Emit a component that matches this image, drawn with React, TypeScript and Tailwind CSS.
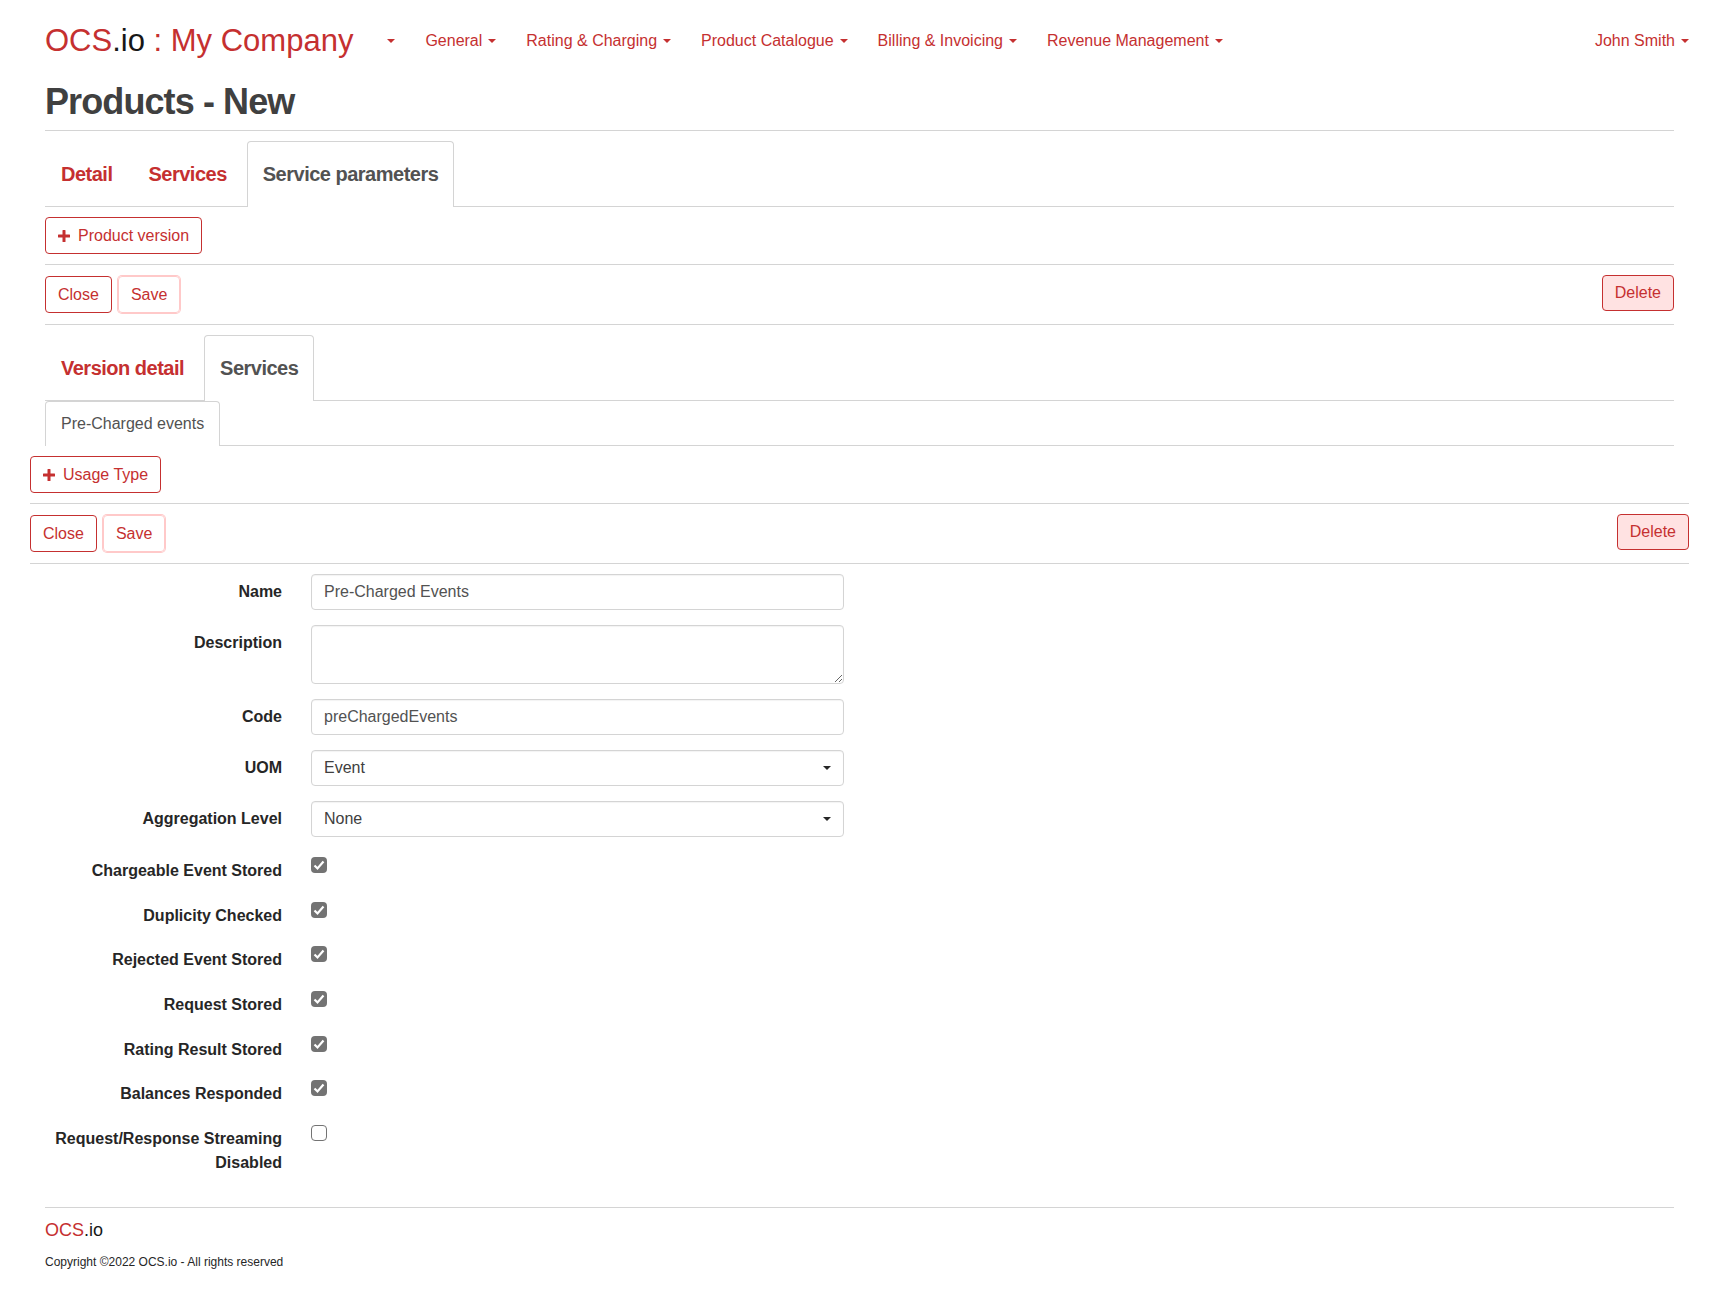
import React from "react";

const RED = "text-[#c53030]";

function Caret() {
  return <span className="ml-1.5 inline-block border-x-4 border-t-4 border-x-transparent border-t-current" />;
}

function PlusIcon() {
  return (
    <svg viewBox="0 0 12 12" className="mr-2 size-3 fill-current">
      <path d="M4.5 0.5a.5.5 0 0 1 .5-.5h2a.5.5 0 0 1 .5.5v4h4a.5.5 0 0 1 .5.5v2a.5.5 0 0 1-.5.5h-4v4a.5.5 0 0 1-.5.5H5a.5.5 0 0 1-.5-.5v-4h-4A.5.5 0 0 1 0 7V5a.5.5 0 0 1 .5-.5h4z" />
    </svg>
  );
}

function NavItem({ label }: { label: string }) {
  return (
    <a className={`flex items-center ${RED}`}>
      {label}
      <Caret />
    </a>
  );
}

function Tab({ label, active }: { label: string; active?: boolean }) {
  return active ? (
    <div className="-mb-px rounded-t border border-b-0 border-neutral-300 bg-white px-[15px] py-4 leading-8 font-semibold text-neutral-600">
      {label}
    </div>
  ) : (
    <div className={`border border-b-0 border-transparent px-[15px] py-4 leading-8 font-semibold ${RED}`}>{label}</div>
  );
}

function OutlineButton({ children, faded }: { children: React.ReactNode; faded?: boolean }) {
  return (
    <button
      className={`flex h-[37px] items-center rounded border px-3 ${RED} ${
        faded ? "border-red-200 ring-1 ring-red-200" : "border-[#c53030]"
      }`}
    >
      {children}
    </button>
  );
}

function ActionBars({ addLabel }: { addLabel: string }) {
  return (
    <div>
      <div className="border-b border-neutral-300 py-2.5">
        <div className="flex">
          <OutlineButton>
            <PlusIcon />
            {addLabel}
          </OutlineButton>
        </div>
      </div>
      <div className="flex items-start justify-between border-b border-neutral-300 py-[11px]">
        <div className="flex gap-1.5">
          <OutlineButton>Close</OutlineButton>
          <OutlineButton faded>Save</OutlineButton>
        </div>
        <button className={`-mt-px flex h-9 items-center rounded border border-[#c53030] bg-red-100 px-3 ${RED}`}>
          Delete
        </button>
      </div>
    </div>
  );
}

function Field({ label, children }: { label: string; children: React.ReactNode }) {
  return (
    <div className="flex gap-[29px]">
      <label className="w-[252px] py-1.5 text-right font-bold">{label}</label>
      <div className="w-[533px]">{children}</div>
    </div>
  );
}

const inputClass = "h-9 w-full rounded border border-neutral-300 px-3 text-neutral-600 inset-shadow-xs";

function SelectBox({ value }: { value: string }) {
  return (
    <div className={`flex items-center justify-between ${inputClass}`}>
      <span className="text-neutral-700">{value}</span>
      <span className="inline-block border-x-4 border-t-4 border-x-transparent border-t-neutral-800" />
    </div>
  );
}

function CheckRow({ label, checked }: { label: string; checked: boolean }) {
  return (
    <div className="flex min-h-7.5 gap-[29px]">
      <label className="w-[252px] pt-1.5 text-right font-bold">{label}</label>
      <div className="pt-1">
        {checked ? (
          <div className="flex size-4 items-center justify-center rounded-sm bg-neutral-500">
            <svg viewBox="0 0 16 16" className="size-4" fill="none" stroke="white" strokeWidth="2.2">
              <path d="M3.5 8.5 L6.5 11.5 L12.5 4.5" />
            </svg>
          </div>
        ) : (
          <div className="size-4 rounded-sm border border-neutral-500 bg-white" />
        )}
      </div>
    </div>
  );
}

export default function App() {
  return (
    <div className="min-h-[1294px] bg-white px-[30px] font-['Liberation_Sans',Arial,sans-serif] text-base text-neutral-800">
      <nav className="flex h-20 items-center justify-between pt-0.5">
        <div className="flex items-center gap-7.5 pl-[15px]">
          <div className={`text-[31px] ${RED}`}>
            OCS<span className="text-neutral-900">.io</span> : My Company
          </div>
          <span className={`ml-1 inline-block border-x-4 border-t-4 border-x-transparent border-t-current ${RED}`} />
          <NavItem label="General" />
          <NavItem label="Rating & Charging" />
          <NavItem label="Product Catalogue" />
          <NavItem label="Billing & Invoicing" />
          <NavItem label="Revenue Management" />
        </div>
        <NavItem label="John Smith" />
      </nav>

      <div className="px-[15px]">
        <h1 className="-mt-px border-b border-neutral-300 pb-1.5 text-4xl leading-tight font-semibold tracking-tight text-neutral-700">
          Products - New
        </h1>
        <div className="mt-2.5 flex gap-1 border-b border-neutral-300 text-xl tracking-tight">
          <Tab label="Detail" />
          <Tab label="Services" />
          <Tab label="Service parameters" active />
        </div>
        <ActionBars addLabel="Product version" />
        <div className="mt-2.5 flex gap-1 border-b border-neutral-300 text-xl tracking-tight">
          <Tab label="Version detail" />
          <Tab label="Services" active />
        </div>
        <div className="flex border-b border-neutral-300">
          <div className="-mb-px rounded-t border border-b-0 border-neutral-300 bg-white px-[15px] py-2.5 leading-6 text-neutral-600">
            Pre-Charged events
          </div>
        </div>
      </div>

      <ActionBars addLabel="Usage Type" />

      <form className="mt-2.5 flex flex-col gap-[15px]">
        <Field label="Name">
          <input readOnly value="Pre-Charged Events" className={inputClass} />
        </Field>
        <Field label="Description">
          <textarea readOnly className="block h-[59px] w-full rounded border border-neutral-300 px-3 inset-shadow-xs" />
        </Field>
        <Field label="Code">
          <input readOnly value="preChargedEvents" className={inputClass} />
        </Field>
        <Field label="UOM">
          <SelectBox value="Event" />
        </Field>
        <Field label="Aggregation Level">
          <SelectBox value="None" />
        </Field>
        <div className="mt-px flex flex-col gap-[14.67px]">
          <CheckRow label="Chargeable Event Stored" checked />
          <CheckRow label="Duplicity Checked" checked />
          <CheckRow label="Rejected Event Stored" checked />
          <CheckRow label="Request Stored" checked />
          <CheckRow label="Rating Result Stored" checked />
          <CheckRow label="Balances Responded" checked />
          <CheckRow label="Request/Response Streaming Disabled" checked={false} />
        </div>
      </form>

      <footer className="mx-[15px] mt-8 border-t border-neutral-300 pt-2">
        <div className={`text-lg ${RED}`}>
          OCS<span className="text-neutral-900">.io</span>
        </div>
        <p className="mt-2.5 text-xs text-neutral-800">Copyright ©2022 OCS.io - All rights reserved</p>
      </footer>
    </div>
  );
}
